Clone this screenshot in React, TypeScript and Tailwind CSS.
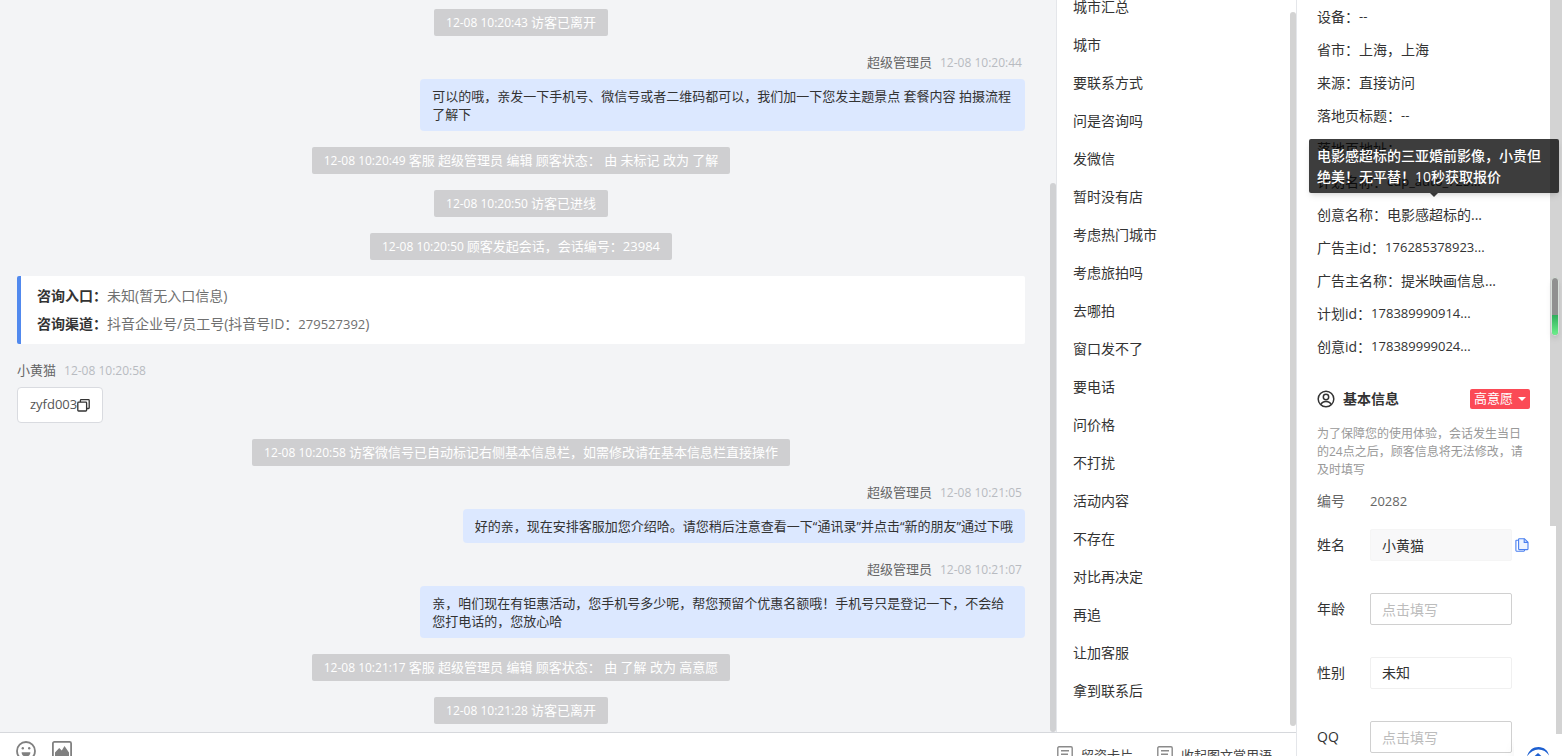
import { ReactNode } from 'react';

type ChatItem =
  | { kind: 'notice'; time: string; text: string }
  | { kind: 'staff'; time: string; text: string }
  | { kind: 'visitor'; time: string; text: string }
  | { kind: 'source' };

const chat: ChatItem[] = [
  { kind: 'notice', time: '12-08 10:20:43', text: '访客已离开' },
  {
    kind: 'staff',
    time: '12-08 10:20:44',
    text: '可以的哦，亲发一下手机号、微信号或者二维码都可以，我们加一下您发主题景点 套餐内容 拍摄流程了解下',
  },
  { kind: 'notice', time: '12-08 10:20:49', text: '客服 超级管理员 编辑 顾客状态： 由 未标记 改为 了解' },
  { kind: 'notice', time: '12-08 10:20:50', text: '访客已进线' },
  { kind: 'notice', time: '12-08 10:20:50', text: '顾客发起会话，会话编号：23984' },
  { kind: 'source' },
  { kind: 'visitor', time: '12-08 10:20:58', text: 'zyfd003' },
  {
    kind: 'notice',
    time: '12-08 10:20:58',
    text: '访客微信号已自动标记右侧基本信息栏，如需修改请在基本信息栏直接操作',
  },
  {
    kind: 'staff',
    time: '12-08 10:21:05',
    text: '好的亲，现在安排客服加您介绍哈。请您稍后注意查看一下“通讯录”并点击“新的朋友”通过下哦',
  },
  {
    kind: 'staff',
    time: '12-08 10:21:07',
    text: '亲，咱们现在有钜惠活动，您手机号多少呢，帮您预留个优惠名额哦！手机号只是登记一下，不会给您打电话的，您放心哈',
  },
  { kind: 'notice', time: '12-08 10:21:17', text: '客服 超级管理员 编辑 顾客状态： 由 了解 改为 高意愿' },
  { kind: 'notice', time: '12-08 10:21:28', text: '访客已离开' },
];

const phrases = [
  '城市汇总', '城市', '要联系方式', '问是咨询吗', '发微信', '暂时没有店', '考虑热门城市',
  '考虑旅拍吗', '去哪拍', '窗口发不了', '要电话', '问价格', '不打扰', '活动内容',
  '不存在', '对比再决定', '再追', '让加客服', '拿到联系后',
];

const details = [
  { label: '设备', value: '--' },
  { label: '省市', value: '上海，上海' },
  { label: '来源', value: '直接访问' },
  { label: '落地页标题', value: '--' },
  { label: '落地页地址', value: '' },
  { label: '计划名称', value: 'cdp_auto_723...' },
  { label: '创意名称', value: '电影感超标的...', tip: '电影感超标的三亚婚前影像，小贵但绝美！无平替！10秒获取报价' },
  { label: '广告主id', value: '176285378923...' },
  { label: '广告主名称', value: '提米映画信息...' },
  { label: '计划id', value: '178389990914...' },
  { label: '创意id', value: '178389999024...' },
];

function CopyIcon() {
  return (
    <svg className="h-[13px] w-[13px]" viewBox="0 0 13 13" fill="none" stroke="#333" strokeWidth="1.3">
      <rect x="0.8" y="3.2" width="8.8" height="8.8" rx="0.8" />
      <path d="M3.4 3V1.4a.7.7 0 0 1 .7-.7h7.4a.7.7 0 0 1 .7.7v7.4a.7.7 0 0 1-.7.7H9.8" />
    </svg>
  );
}

function PagesIcon() {
  return (
    <svg className="h-[14px] w-[14px]" viewBox="0 0 14 14" fill="none" stroke="#4a7ff0" strokeWidth="1.1">
      <path d="M3.6 2.2H1.5a.6.6 0 0 0-.6.6v9.800c0 .4.3.6.6.6h7.400c.4 0 .6-.2.6-.6v-1" />
      <path d="M4.200.7h5.200L13 4.300V11a.6.6 0 0 1-.6.6H4.200a.6.6 0 0 1-.6-.6V1.300c0-.3.3-.6.6-.6z" fill="#eef4ff" />
      <path d="M9.2.7v3.7H13" />
    </svg>
  );
}

function UserIcon() {
  return (
    <svg className="h-[18px] w-[18px]" viewBox="0 0 18 18" fill="none" stroke="#333" strokeWidth="1.5">
      <circle cx="9" cy="9" r="7.8" />
      <circle cx="9" cy="7" r="2.7" />
      <path d="M4 14.6c.6-2.2 2.5-3.2 5-3.2s4.400 1 5 3.200" />
    </svg>
  );
}

function CardIcon() {
  return (
    <svg className="h-4 w-4 shrink-0" viewBox="0 0 16 16" fill="none" stroke="#8a8a8a" strokeWidth="1.4">
      <rect x="0.8" y="0.8" width="14.4" height="12.4" rx="1.2" />
      <path d="M4 4.8h8M4 8.2h7" />
    </svg>
  );
}

function SmileIcon() {
  return (
    <svg className="h-5 w-5" viewBox="0 0 20 20" fill="none" stroke="#808080" strokeWidth="1.8">
      <circle cx="10" cy="10" r="9" />
      <path d="M5.6 11.2h8.8c0 2.6-1.9 4.4-4.4 4.4s-4.4-1.8-4.4-4.4z" fill="#808080" stroke="none" />
      <circle cx="6.800" cy="7.2" r="1.2" fill="#808080" stroke="none" />
      <circle cx="13.2" cy="7.2" r="1.2" fill="#808080" stroke="none" />
    </svg>
  );
}

function PictureIcon() {
  return (
    <svg className="h-5 w-5" viewBox="0 0 20 20" fill="none" stroke="#808080" strokeWidth="1.8">
      <rect x="0.9" y="0.9" width="18.2" height="16.2" rx="1.5" />
      <path d="M3 15v-3.500L7.200 7l2.600 2.600L12.500 5l4.500 6.500V15z" fill="#808080" stroke="none" />
    </svg>
  );
}

function AssistantLogo() {
  return (
    <svg className="h-6 w-6" viewBox="0 0 24 24">
      <path d="M1 10.5C2.5 4.5 7 1 12.500 1S22 4.500 23 9.500c-2.500-4-6-6-10.500-6-4.600 0-8.500 2.500-11.500 7z" fill="#1d5fd0" />
      <path d="M12 7l5 4.500c1 1 .6 2.500-.6 2.500H7.600c-1.200 0-1.600-1.500-.6-2.500z" fill="#1d5fd0" />
    </svg>
  );
}

function Notice({ time, text }: { time: string; text: string }) {
  return (
    <p className="flex h-[27px] items-center gap-[3px] self-center rounded-xs bg-[#cfcfd1] px-3 text-[13px] text-white">
      <time className="text-xs">{time}</time>
      <span>{text}</span>
    </p>
  );
}

function Message({ name, time, mine, children }: { name: string; time: string; mine?: boolean; children: ReactNode }) {
  return (
    <article className={mine ? 'flex flex-col items-end' : 'flex flex-col items-start'}>
      <header className="mb-[5px] flex h-[22px] items-center gap-2 text-[13px] text-[#666]">
        <span>{name}</span>
        <time className="w-[85px] text-xs text-[#b8bbc1]">{time}</time>
      </header>
      {children}
    </article>
  );
}

function SourceCard() {
  return (
    <dl className="rounded-xs border-l-4 border-[#5189ee] bg-white px-4 py-1.5 text-sm leading-7">
      <div className="flex">
        <dt className="font-bold text-[#333]">咨询入口：</dt>
        <dd className="text-[#707070]">未知(暂无入口信息)</dd>
      </div>
      <div className="flex">
        <dt className="font-bold text-[#333]">咨询渠道：</dt>
        <dd className="text-[#707070]">
          抖音企业号/员工号(抖音号ID：<span className="text-[13px]">279527392</span>)
        </dd>
      </div>
    </dl>
  );
}

function ChatPanel() {
  return (
    <main className="flex min-w-0 flex-1 bg-[#f3f4f6]">
      <div className="flex min-w-0 flex-1 flex-col gap-4 pt-[9px] pr-[25px] pb-2 pl-[17px]">
        {chat.map((item, i) => {
          if (item.kind === 'notice') return <Notice key={i} time={item.time} text={item.text} />;
          if (item.kind === 'source') return <SourceCard key={i} />;
          if (item.kind === 'visitor') {
            return (
              <Message key={i} name="小黄猫" time={item.time}>
                <div className="flex h-9 items-center rounded border border-[#d9dbe0] bg-white px-3 text-[13px] text-[#555]">
                  {item.text}
                  <button type="button" aria-label="复制">
                    <CopyIcon />
                  </button>
                </div>
              </Message>
            );
          }
          return (
            <Message key={i} name="超级管理员" time={item.time} mine>
              <p className="max-w-[60%] rounded bg-[#dce8ff] px-3 py-2 text-[13px] leading-[18px] text-[#333]">
                {item.text}
              </p>
            </Message>
          );
        })}
      </div>
      <div className="flex w-1.5 flex-col pt-[183px]">
        <div className="flex-1 rounded-full bg-[#d0d1d3]" />
      </div>
    </main>
  );
}

function PhrasePanel() {
  return (
    <nav className="flex w-60 shrink-0 overflow-hidden border-l border-[#e4e6ea] bg-white">
      <ul className="-mt-3 flex-1 pl-4 text-sm text-[#333]">
        {phrases.map((phrase) => (
          <li key={phrase} className="flex h-[38px] items-center">
            <a href="#">{phrase}</a>
          </li>
        ))}
      </ul>
      <div className="flex w-1.5 flex-col pt-3 pb-1.5">
        <div className="flex-1 rounded-full bg-[#d3d3d3]" />
      </div>
    </nav>
  );
}

function Toolbar() {
  return (
    <footer className="flex h-6 shrink-0 items-start justify-between overflow-hidden border-t border-[#d6d8dc] bg-white pr-6 pl-4">
      <div className="flex gap-4 pt-2">
        <button type="button" aria-label="表情">
          <SmileIcon />
        </button>
        <button type="button" aria-label="图片">
          <PictureIcon />
        </button>
      </div>
      <div className="flex gap-6 pt-[13px] text-[13px] leading-[18px] text-[#444]">
        <button type="button" className="flex items-start gap-2">
          <CardIcon />
          留资卡片
        </button>
        <button type="button" className="flex items-start gap-2">
          <CardIcon />
          收起图文常用语
        </button>
      </div>
    </footer>
  );
}

function DetailRow({ label, value, tip }: { label: string; value: string; tip?: string }) {
  const latin = /^[\w.-]*$/.test(value);
  return (
    <div className="relative flex h-[33px] items-center whitespace-nowrap">
      <dt>{label}：</dt>
      <dd className={latin ? 'text-[13px]' : 'text-sm'}>{value}</dd>
      {tip && (
        <div
          role="tooltip"
          className="absolute bottom-full -left-2 z-10 mb-[5px] w-[250px] rounded-xs bg-black/76 px-2 py-1.5 leading-[21px] font-medium whitespace-normal text-white shadow-md"
        >
          {tip}
          <span className="absolute top-full left-1/2 -ml-1 border-x-4 border-t-4 border-x-transparent border-t-black/76" />
        </div>
      )}
    </div>
  );
}

function ProfileForm() {
  return (
    <form className="flex flex-col gap-8 text-sm text-[#333]">
      <div className="flex h-8 items-center">
        <label htmlFor="name" className="w-[53px]">姓名</label>
        <input
          id="name"
          defaultValue="小黄猫"
          className="h-8 w-[142px] rounded-xs border border-[#f5f5f5] bg-[#f8f8f9] px-[11px] outline-none"
        />
        <button type="button" aria-label="复制姓名" className="ml-[3px]">
          <PagesIcon />
        </button>
      </div>
      <div className="flex h-8 items-center">
        <label htmlFor="age" className="w-[53px]">年龄</label>
        <input
          id="age"
          placeholder="点击填写"
          className="h-8 w-[142px] rounded-xs border border-[#d0d0d0] px-[11px] outline-none placeholder:text-[#bcbcbc]"
        />
      </div>
      <div className="flex h-8 items-center">
        <label htmlFor="gender" className="w-[53px]">性别</label>
        <select
          id="gender"
          defaultValue="未知"
          className="h-8 w-[142px] appearance-none rounded-xs border border-[#f0f0f0] bg-white px-[11px] outline-none"
        >
          <option>未知</option>
          <option>男</option>
          <option>女</option>
        </select>
      </div>
      <div className="flex h-8 items-center">
        <label htmlFor="qq" className="w-[53px]">QQ</label>
        <input
          id="qq"
          placeholder="点击填写"
          className="h-8 w-[142px] rounded-xs border border-[#d0d0d0] px-[11px] outline-none placeholder:text-[#bcbcbc]"
        />
      </div>
    </form>
  );
}

function CustomerPanel() {
  return (
    <aside className="relative flex w-[266px] shrink-0 border-l border-[#e4e6ea] bg-white">
      <div className="min-w-0 flex-1 pr-5 pl-5">
        <dl className="text-sm text-[#333]">
          {details.map((row) => (
            <DetailRow key={row.label} {...row} />
          ))}
        </dl>
        <div className="mt-6 flex h-6 items-center gap-2">
          <UserIcon />
          <h2 className="flex-1 text-sm font-bold text-[#333]">基本信息</h2>
          <button type="button" className="flex h-5 items-center gap-[5px] rounded-xs bg-[#fb4a56] px-1 text-[13px] text-white">
            高意愿
            <span className="border-x-4 border-t-4 border-x-transparent border-t-white" />
          </button>
        </div>
        <p className="mt-3.5 text-xs leading-[18px] text-[#999]">
          为了保障您的使用体验，会话发生当日的24点之后，顾客信息将无法修改，请及时填写
        </p>
        <div className="mt-3 mb-[18px] flex h-5 items-center text-sm text-[#666]">
          <span className="w-[53px]">编号</span>
          <span className="text-[13px]">20282</span>
        </div>
        <ProfileForm />
      </div>
      <div className="flex w-1.5 flex-col">
        <div className="h-[526px] bg-[#d3d3d3]" />
      </div>
      <div className="w-1.5 bg-[#d3d3d3]" />
      <div className="absolute top-[277px] right-[3px] flex h-[59px] w-2 flex-col overflow-hidden rounded-full border border-[#d8e0da] bg-[#909090] shadow-md">
        <div className="mt-auto h-5 bg-linear-to-b from-[#2fae5c] to-[#6df08c]" />
      </div>
      <button
        type="button"
        aria-label="助手"
        className="absolute right-0 bottom-0 flex h-[22px] w-12 items-start justify-center overflow-hidden rounded-tl-md bg-white pt-3 shadow-lg"
      >
        <AssistantLogo />
      </button>
    </aside>
  );
}

export default function App() {
  return (
    <div className="flex h-screen overflow-hidden bg-white font-['Open_Sans','Noto_Sans_CJK_SC',sans-serif]">
      <div className="flex min-w-0 flex-1 flex-col">
        <div className="flex min-h-0 flex-1">
          <ChatPanel />
          <PhrasePanel />
        </div>
        <Toolbar />
      </div>
      <CustomerPanel />
    </div>
  );
}
